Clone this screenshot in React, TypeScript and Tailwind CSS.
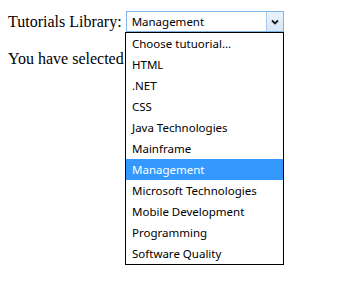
import { useState } from "react";

const options = [
  "Choose tutuorial...",
  "HTML",
  ".NET",
  "CSS",
  "Java Technologies",
  "Mainframe",
  "Management",
  "Microsoft Technologies",
  "Mobile Development",
  "Programming",
  "Software Quality",
];

export default function App() {
  const [selected] = useState("Management");

  return (
    <div className="relative min-h-[291px] w-[353px] bg-white px-2 pt-[11px] text-black">
      {/* Label + select */}
      <div className="flex h-[21px] items-center">
        <span className="text-[16px] leading-[18px]" style={{ fontFamily: "'Liberation Serif', serif" }}>
          Tutorials Library:
        </span>
        <div className="ml-[4px] flex h-[21px] w-[158px] items-stretch border border-[#7eb4ea] bg-white">
          <span
            className="flex flex-1 items-center pl-[5px] text-[11.5px] leading-none"
            style={{ fontFamily: "'Noto Sans', sans-serif" }}
          >
            {selected}
          </span>
          <span className="flex w-[17px] items-center justify-center border-l border-[#a9c8ec] bg-gradient-to-b from-[#eaf3fc] to-[#d6e7f8]">
            <svg width="8" height="6" viewBox="0 0 8 6">
              <path d="M1 1.5 L4 4.5 L7 1.5" fill="none" stroke="#1a1a1a" strokeWidth="1.8" />
            </svg>
          </span>
        </div>
      </div>

      <p className="mt-[18px] text-[16px] leading-[18px]" style={{ fontFamily: "'Liberation Serif', serif" }}>
        You have selected
      </p>

      {/* Open dropdown list */}
      <ul
        className="absolute left-[125px] top-[32px] w-[159px] border border-black bg-white"
        style={{ fontFamily: "'Noto Sans', sans-serif" }}
      >
        {options.map((o) => (
          <li
            key={o}
            className={
              o === selected
                ? "flex h-[21px] items-center bg-[#3399ff] pl-[6px] text-[11.5px] text-white"
                : "flex h-[21px] items-center pl-[6px] text-[11.5px] text-black"
            }
          >
            {o}
          </li>
        ))}
      </ul>
    </div>
  );
}
